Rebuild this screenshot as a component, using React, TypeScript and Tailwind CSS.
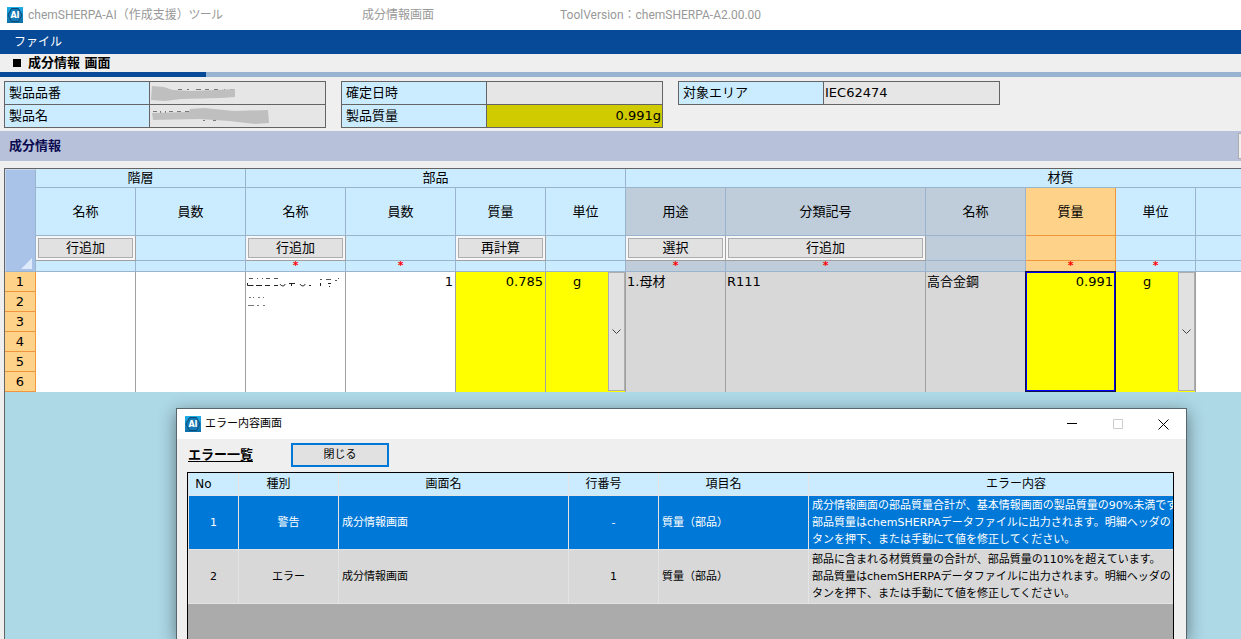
import { ReactNode } from 'react';

const HEAD = 'border-r border-b border-[#9ab3cf] p-0 text-center font-normal';

const AppIcon = () => (
    <svg width="16" height="16" viewBox="0 0 16 16" className="shrink-0" aria-hidden="true">
        <defs>
            <linearGradient id="appIconFill" x1="0" y1="0" x2="0" y2="1">
                <stop offset="0" stopColor="#1fb0ea" />
                <stop offset="1" stopColor="#0d6ea6" />
            </linearGradient>
        </defs>
        <rect width="16" height="16" fill="url(#appIconFill)" />
        <path d="M4.5 1.500h7L15 8l-3.500 6.500h-7L1 8z" fill="#1479b8" stroke="#0b4a70" />
        <text x="8" y="11" textAnchor="middle" fontSize="8" fontWeight="700" fill="#fff" fontFamily="DejaVu Sans, sans-serif">
            AI
        </text>
    </svg>
);

interface InfoRow {
    label: string;
    value?: ReactNode;
    highlight?: boolean;
}

const InfoTable = ({ rows }: { rows: InfoRow[] }) => (
    <table className="w-[322px] shrink-0 table-fixed border-collapse self-start">
        <tbody>
            {rows.map((row) => (
                <tr key={row.label} className="h-[23px]">
                    <th className="w-[145px] border border-[#646464] bg-[#cbecff] px-1 py-0 text-left font-normal">
                        {row.label}
                    </th>
                    <td
                        className={
                            row.highlight
                                ? 'border border-[#646464] bg-[#d0cb00] p-0 pr-px text-right'
                                : 'border border-[#646464] bg-[#e6e6e6] p-0 pl-px'
                        }
                    >
                        {row.value}
                    </td>
                </tr>
            ))}
        </tbody>
    </table>
);

const MaskedCode = () => (
    <svg width="90" height="18" viewBox="0 0 90 18" className="block" aria-label="非表示">
        <path d="M1.500 4v8M27 5.500h4M36 5.500h2M45 5.500h5M54 5.500h4M63 5.500h4M73 5.500h1M79 5.500h4" stroke="#777" fill="none" />
        <path d="M1 2l12 1 9 3 18 1 24-1 20-1v8l-14 1-40 1-16 2-14-1z" fill="#bfbfbf" />
    </svg>
);

const MaskedName = () => (
    <svg width="120" height="18" viewBox="0 0 120 18" className="block" aria-label="非表示">
        <path d="M2 4.500h4M9.500 4v3M14.500 4v3M18 4.500h4M26 4.500h4M34 4.500h4M52 13.500h2M62 13.500h3" stroke="#777" fill="none" />
        <path d="M1 6l37-1 1-3 14-1 30 3 34-1 1 13-14 1-26-3-30-2-46 1z" fill="#bfbfbf" />
    </svg>
);

const MaskedPart = () => (
    <svg width="98" height="34" viewBox="0 0 98 34" className="block" aria-label="非表示">
        <path
            d="M3 6.500h4M11 6.500h1M16 6.500h1M20 6.500h4M28 6.500h4M74 7.500h2M80 7.500h5M89 8.500h2M92 6.500h1"
            stroke="#555"
            fill="none"
        />
        <path
            d="M1.500 11v2.500h6M10 13.500h6M19 13.500h5M28 13.500h4M34 12c1 2.500 5 2.500 5 0M43 11.500h6M45.500 11v3M54 12c1 2.500 5 2.500 5 0M63 13.500h2M74.500 11v3M82 11.500h3M83 14.500h1"
            stroke="#222"
            fill="none"
        />
        <path d="M3 25.500h2M7 25.500h1M12 25.500h2M17 25.500h1M2 33.500h6M11 33.500h2M17 33.500h2" stroke="#777" fill="none" />
    </svg>
);

const GridButton = ({ children }: { children: ReactNode }) => (
    <button type="button" className="block h-5 w-full border border-[#adadad] bg-[#e1e1e1] leading-4">
        {children}
    </button>
);

const UnitPicker = ({ label }: { label: string }) => (
    <div className="flex h-[119px]">
        <select
            aria-label={label}
            defaultValue="g"
            className="h-5 min-w-0 flex-1 appearance-none bg-transparent text-center [text-align-last:center]"
        >
            <option>g</option>
            <option>mg</option>
            <option>kg</option>
        </select>
        <button
            type="button"
            aria-label={`${label}を開く`}
            className="flex w-[17px] items-center justify-center border border-[#adadad] bg-[#e1e1e1]"
        >
            <svg width="9" height="6" viewBox="0 0 9 6" fill="none" stroke="#444">
                <path d="M.5 .5l4 4 4-4" />
            </svg>
        </button>
    </div>
);

type Tone = 'blue' | 'gray' | 'orange';

interface Column {
    name: string;
    tone: Tone;
    button?: string;
    required?: boolean;
}

const tones: Record<Tone, string> = {
    blue: 'bg-[#cbecff]',
    gray: 'bg-[#bfccd9]',
    orange: 'bg-[#ffd28a] border-[#f0963c]',
};

const columns: Column[] = [
    { name: '名称', tone: 'blue', button: '行追加' },
    { name: '員数', tone: 'blue' },
    { name: '名称', tone: 'blue', button: '行追加', required: true },
    { name: '員数', tone: 'blue', required: true },
    { name: '質量', tone: 'blue', button: '再計算' },
    { name: '単位', tone: 'blue' },
    { name: '用途', tone: 'gray', button: '選択', required: true },
    { name: '分類記号', tone: 'gray', button: '行追加', required: true },
    { name: '名称', tone: 'gray' },
    { name: '質量', tone: 'orange', required: true },
    { name: '単位', tone: 'blue', required: true },
    { name: '', tone: 'blue' },
];

const CompositionGrid = () => {
    const cell = 'border-r border-[#a0a0a0] p-0 align-top leading-5';
    return (
        <table className="w-[1491px] table-fixed border-separate border-spacing-0">
            <colgroup>
                <col className="w-[31px]" />
                <col className="w-[100px]" />
                <col className="w-[110px]" />
                <col className="w-[100px]" />
                <col className="w-[110px]" />
                <col className="w-[90px]" />
                <col className="w-[80px]" />
                <col className="w-[100px]" />
                <col className="w-[200px]" />
                <col className="w-[100px]" />
                <col className="w-[90px]" />
                <col className="w-[80px]" />
                <col className="w-[300px]" />
            </colgroup>
            <thead>
                <tr className="h-[19px] leading-4">
                    <td
                        rowSpan={4}
                        className="border border-[#9ab3cf] border-t-[#c5d6ee] border-l-[#c5d6ee] bg-[#a8c2e8] p-0 pr-[3px] pb-[2px] align-bottom"
                    >
                        <svg width="11" height="11" viewBox="0 0 11 11" className="ml-auto block">
                            <path d="M11 0v11H0z" fill="#dfeafa" />
                        </svg>
                    </td>
                    <th colSpan={2} className={`${HEAD} bg-[#cbecff]`}>階層</th>
                    <th colSpan={4} className={`${HEAD} bg-[#cbecff]`}>部品</th>
                    <th colSpan={6} className={`${HEAD} bg-[#cbecff]`}>材質</th>
                </tr>
                <tr className="h-12 leading-4">
                    {columns.map((col, i) => (
                        <th key={i} className={`${HEAD} ${tones[col.tone]}`}>{col.name}</th>
                    ))}
                </tr>
                <tr className="h-[25px]">
                    {columns.map((col, i) =>
                        col.button ? (
                            <td key={i} className="border-r border-b border-[#a0a0a0] bg-[#f7f7f7] p-[2px]">
                                <GridButton>{col.button}</GridButton>
                            </td>
                        ) : (
                            <td key={i} className={`${HEAD} ${tones[col.tone]}`} />
                        ),
                    )}
                </tr>
                <tr className="h-[11px] text-[11px] leading-[10px] text-[#ff0000]">
                    {columns.map((col, i) => (
                        <td key={i} className={`${HEAD} ${tones[col.tone]}`}>
                            {col.required && <span className="block h-[10px] font-bold">*</span>}
                        </td>
                    ))}
                </tr>
            </thead>
            <tbody>
                {[1, 2, 3, 4, 5, 6].map((n) => (
                    <tr key={n} className="h-5">
                        <th className="border-r border-b border-[#f0963c] bg-[#ffd28a] p-0 text-center leading-4 font-normal">
                            {n}
                        </th>
                        {n === 1 && (
                            <>
                                <td rowSpan={6} className={`${cell} bg-white`} />
                                <td rowSpan={6} className={`${cell} bg-white`} />
                                <td rowSpan={6} className={`${cell} bg-white`}>
                                    <MaskedPart />
                                </td>
                                <td rowSpan={6} className={`${cell} bg-white pr-[2px] text-right`}>1</td>
                                <td rowSpan={6} className={`${cell} bg-[#ffff00] pr-[2px] text-right`}>0.785</td>
                                <td rowSpan={6} className={`${cell} bg-[#ffff00]`}>
                                    <UnitPicker label="部品の単位" />
                                </td>
                                <td rowSpan={6} className={`${cell} bg-[#d8d8d8] pl-px`}>1.母材</td>
                                <td rowSpan={6} className={`${cell} bg-[#d8d8d8] pl-px`}>R111</td>
                                <td rowSpan={6} className={`${cell} bg-[#d8d8d8] pl-px`}>高合金鋼</td>
                                <td rowSpan={6} className={`${cell} bg-[#ffff00]`}>
                                    <div className="h-[119px] border border-[#0000ff] pr-px text-right leading-[18px] outline outline-[#10104a]">
                                        0.991
                                    </div>
                                </td>
                                <td rowSpan={6} className={`${cell} bg-[#ffff00]`}>
                                    <UnitPicker label="材質の単位" />
                                </td>
                                <td rowSpan={6} className={`${cell} bg-white`} />
                            </>
                        )}
                    </tr>
                ))}
            </tbody>
        </table>
    );
};

const errors = [
    {
        no: 1,
        kind: '警告',
        screen: '成分情報画面',
        line: '-',
        item: '質量（部品）',
        selected: true,
        text: [
            '成分情報画面の部品質量合計が、基本情報画面の製品質量の90%未満です',
            '部品質量はchemSHERPAデータファイルに出力されます。明細ヘッダの',
            'タンを押下、または手動にて値を修正してください。',
        ],
    },
    {
        no: 2,
        kind: 'エラー',
        screen: '成分情報画面',
        line: '1',
        item: '質量（部品）',
        selected: false,
        text: [
            '部品に含まれる材質質量の合計が、部品質量の110%を超えています。',
            '部品質量はchemSHERPAデータファイルに出力されます。明細ヘッダの',
            'タンを押下、または手動にて値を修正してください。',
        ],
    },
];

const ErrorDialog = () => {
    const cell = 'border-r border-b border-[#e3e3e3] py-0';
    return (
        <section
            role="dialog"
            aria-label="エラー内容画面"
            className="absolute top-4 right-[54px] bottom-0 left-[171px] flex flex-col border border-b-0 border-[#55666f] bg-[#efefef] shadow-[0_4px_16px_rgba(0,0,0,0.45)]"
        >
            <header className="flex h-[30px] shrink-0 items-center bg-white pl-2">
                <AppIcon />
                <h2 className="ml-1 flex-1 text-[11px]">エラー内容画面</h2>
                <div className="flex">
                    <button type="button" aria-label="最小化" className="flex h-[30px] w-[45px] items-center justify-center">
                        <svg width="11" height="11" viewBox="0 0 11 11" stroke="#000">
                            <path d="M0 4.500h10" />
                        </svg>
                    </button>
                    <button type="button" aria-label="最大化" disabled className="flex h-[30px] w-[45px] items-center justify-center">
                        <svg width="10" height="10" viewBox="0 0 10 10" fill="none" stroke="#ccc">
                            <path d="M.5 .5h9v9h-9z" />
                        </svg>
                    </button>
                    <button type="button" aria-label="閉じる" className="flex h-[30px] w-[46px] items-center justify-center">
                        <svg width="11" height="11" viewBox="0 0 11 11" stroke="#000">
                            <path d="M.5 .5l10 10M10.500 .5l-10 10" />
                        </svg>
                    </button>
                </div>
            </header>
            <div className="flex shrink-0 items-center pt-1 pb-[5px] pl-[11px]">
                <h3 className="w-[103px] font-bold underline underline-offset-2">エラー一覧</h3>
                <button type="button" className="h-6 w-[98px] border-2 border-[#0078d7] bg-[#e1e1e1] text-[11px] leading-4">
                    閉じる
                </button>
            </div>
            <div className="mr-3 ml-[10px] min-h-0 flex-1 overflow-hidden border border-b-0 border-black bg-[#ababab]">
                <table className="w-[1056px] table-fixed border-separate border-spacing-0 border-l border-[#e3e3e3] text-[11px] whitespace-nowrap">
                    <colgroup>
                        <col className="w-[50px]" />
                        <col className="w-[100px]" />
                        <col className="w-[230px]" />
                        <col className="w-[90px]" />
                        <col className="w-[150px]" />
                        <col className="w-[435px]" />
                    </colgroup>
                    <thead>
                        <tr className="h-[23px] bg-[#cbecff] text-xs">
                            {['No', '種別', '画面名', '行番号', '項目名', 'エラー内容'].map((name) => (
                                <th key={name} className={`${cell} pr-5 pl-0 text-center font-normal`}>
                                    {name}
                                </th>
                            ))}
                        </tr>
                    </thead>
                    <tbody>
                        {errors.map((err) => (
                            <tr
                                key={err.no}
                                className={err.selected ? 'h-[54px] bg-[#0078d7] text-white' : 'h-[54px] bg-[#d8d8d8]'}
                            >
                                <td className={`${cell} px-0 text-center`}>{err.no}</td>
                                <td className={`${cell} px-0 text-center`}>{err.kind}</td>
                                <td className={`${cell} px-[3px]`}>{err.screen}</td>
                                <td className={`${cell} px-0 text-center`}>{err.line}</td>
                                <td className={`${cell} px-[3px]`}>{err.item}</td>
                                <td className={`${cell} px-[3px] leading-[17px]`}>
                                    {err.text.map((line) => (
                                        <p key={line}>{line}</p>
                                    ))}
                                </td>
                            </tr>
                        ))}
                    </tbody>
                </table>
            </div>
        </section>
    );
};

const App = () => {
    return (
        <div className="flex min-h-screen flex-col overflow-hidden bg-[#efefef] font-['DejaVu_Sans','Noto_Sans_CJK_JP',sans-serif] text-[13px] leading-4 text-black">
            <header className="flex h-[30px] items-center bg-white pl-[7px] font-['Roboto','Noto_Sans_CJK_JP',sans-serif] text-xs whitespace-nowrap text-[#999]">
                <AppIcon />
                <span className="ml-[5px] w-[334px]">
                    chemSHERPA-AI（作成支援）<span className="[font-feature-settings:'palt']">ツール</span>
                </span>
                <span className="w-[198px]">成分情報画面</span>
                <span>ToolVersion：chemSHERPA-A2.00.00</span>
            </header>
            <nav className="flex h-6 items-center bg-[#074a97] pl-[14px] text-xs text-white">
                <button type="button">ファイル</button>
            </nav>
            <div className="flex h-[18px] items-center pl-[13px]">
                <h1 className="flex items-center font-bold">
                    <span className="mr-[7px] h-2 w-2 bg-black" />
                    成分情報 画面
                </h1>
            </div>
            <div className="h-[5px] bg-[#98b3cf]">
                <div className="h-full w-[206px] bg-[#074a97]" />
            </div>
            <div className="flex gap-[15px] px-1 pt-1 pb-[3px]">
                <InfoTable
                    rows={[
                        { label: '製品品番', value: <MaskedCode /> },
                        { label: '製品名', value: <MaskedName /> },
                    ]}
                />
                <InfoTable
                    rows={[{ label: '確定日時' }, { label: '製品質量', value: '0.991g', highlight: true }]}
                />
                <InfoTable rows={[{ label: '対象エリア', value: 'IEC62474' }]} />
            </div>
            <div className="flex h-[30px] items-center justify-between bg-[#b7c1da] pl-[9px]">
                <h2 className="font-bold text-[#0a0a50]">成分情報</h2>
                <span className="h-[26px] w-[3px] border border-r-0 border-[#adadad] bg-[#f0f0f0]" />
            </div>
            <main className="mt-[7px] ml-1 flex flex-1 flex-col overflow-hidden border-t border-l border-[#646464] bg-[#add8e6]">
                <CompositionGrid />
                <div className="relative min-h-60 flex-1">
                    <ErrorDialog />
                </div>
            </main>
        </div>
    );
};

export default App;
